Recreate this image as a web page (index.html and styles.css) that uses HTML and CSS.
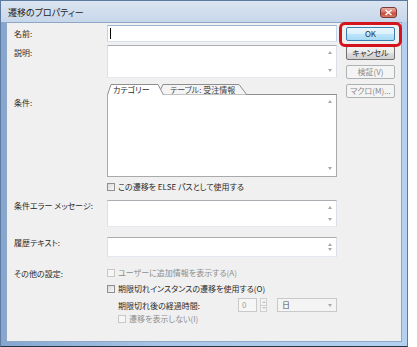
FILE: index.html
```html
<!DOCTYPE html>
<html lang="ja">
<head>
  <meta charset="UTF-8">
  <title>遷移のプロパティー</title>
  <link rel="stylesheet" href="styles.css">
</head>
<body>
  <div class="window">
    <div class="titlebar">
      <span class="title">遷移のプロパティー</span>
      <span class="close">
        <svg width="9" height="7" viewBox="0 0 9 7"><path d="M1.5 1 L7.5 6 M7.5 1 L1.5 6" stroke="#fff" stroke-width="1.6"/></svg>
      </span>
    </div>

    <div class="client">
      <div class="form">
        <!-- name -->
        <div class="row row-name">
          <div class="label lb-name">名前:</div>
          <div class="field">
            <div class="textbox name-box"><span class="caret"></span></div>
          </div>
        </div>

        <!-- description -->
        <div class="row row-desc">
          <div class="label lb-desc">説明:</div>
          <div class="field">
            <div class="textbox desc-box">
              <div class="scroll"><span class="up"></span><span class="down"></span></div>
            </div>
          </div>
        </div>

        <!-- condition tabs -->
        <div class="row row-cond">
          <div class="label lb-cond">条件:</div>
          <div class="field">
            <div class="tabs">
              <svg class="tab-shapes" width="230" height="11" viewBox="0 0 230 11">
                <polyline points="55,10.5 230,10.5" fill="none" stroke="#8e8e8e"/>
                <polygon points="51,11 56,0.5 132,0.5 140,11" fill="#f4f4f4" stroke="#8e8e8e"/>
                <polygon points="0,11 4,0.5 51,0.5 57,11" fill="#fff"/>
                <polyline points="0.5,11 4,0.5 51,0.5 56.5,11" fill="none" stroke="#8e8e8e"/>
              </svg>
              <span class="tab tab-on">カテゴリー</span>
              <span class="tab tab-off">テーブル: 受注情報</span>
            </div>
            <div class="panel">
              <div class="scroll"><span class="up"></span><span class="down"></span></div>
            </div>
          </div>
        </div>

        <!-- else path -->
        <div class="row row-else">
          <div class="label"></div>
          <div class="field check">
            <span class="box"></span>この遷移を ELSE パスとして使用する
          </div>
        </div>

        <!-- error message -->
        <div class="row row-err">
          <div class="label lb-err">条件エラー メッセージ:</div>
          <div class="field">
            <div class="textbox err-box">
              <div class="scroll"><span class="up"></span><span class="down"></span></div>
            </div>
          </div>
        </div>

        <!-- history -->
        <div class="row row-hist">
          <div class="label lb-hist">履歴テキスト:</div>
          <div class="field">
            <div class="textbox hist-box">
              <div class="scroll"><span class="up"></span><span class="down"></span></div>
            </div>
          </div>
        </div>

        <!-- other settings -->
        <div class="row row-other">
          <div class="label">その他の設定:</div>
          <div class="field check disabled">
            <span class="box"></span>ユーザーに追加情報を表示する(A)
          </div>
        </div>
        <div class="row row-expire">
          <div class="label"></div>
          <div class="field check">
            <span class="box"></span>期限切れインスタンスの遷移を使用する(O)
          </div>
        </div>
        <div class="row row-elapsed">
          <div class="label"></div>
          <div class="field elapsed">
            <span class="elapsed-label">期限切れ後の経過時間:</span>
            <span class="spin-input">0</span>
            <span class="spin-btns">
              <span class="spin-btn"><span class="up"></span></span>
              <span class="spin-btn"><span class="down"></span></span>
            </span>
            <span class="combo">日<span class="down"></span></span>
          </div>
        </div>
        <div class="row row-hide">
          <div class="label"></div>
          <div class="field check disabled indent">
            <span class="box"></span>遷移を表示しない(I)
          </div>
        </div>
      </div>

      <div class="side">
        <button class="btn btn-default">OK</button>
        <button class="btn">キャンセル</button>
        <button class="btn" disabled>検証(V)</button>
        <button class="btn" disabled>マクロ(M)...</button>
      </div>

      <div class="highlight"></div>
    </div>
  </div>
</body>
</html>
```

FILE: styles.css
```css
body {
  margin: 0;
  background: #fff;
  font-family: "Noto Sans CJK JP", "Noto Sans", sans-serif;
  font-size: 8px;
  font-feature-settings: "palt";
  color: #2a2a2a;
}

.window {
  width: 408px;
  height: 347px;
  box-sizing: border-box;
  border: 1px solid #5d7ba0;
  border-bottom-color: #24344a;
  background: linear-gradient(to right, #86a6cf 0, #a9c6e6 40%, #b4d2ef 100%);
  padding: 0 5px 4px 5px;
  display: flex;
  flex-direction: column;
}

.titlebar {
  height: 21px;
  margin: 0 -5px;
  padding: 0 5px;
  background: linear-gradient(to bottom, #dbe5f1, #c7d7ea);
  display: flex;
  justify-content: space-between;
  align-items: flex-start;
}

.title {
  margin-top: 6px;
  padding-left: 2px;
  font-size: 9px;
  line-height: 12px;
  color: #1a1a1a;
}

.close {
  margin-top: 6px;
  margin-right: 5px;
  width: 17px;
  height: 11px;
  box-sizing: border-box;
  border: 1px solid #7a3b36;
  border-radius: 3px;
  background: linear-gradient(to bottom, #eab0a6, #d26a5c 50%, #c2402f 51%, #d67d67);
  display: flex;
  align-items: center;
  justify-content: center;
}

.client {
  flex: 1;
  position: relative;
  display: flex;
  background: #f0f0f0;
  border: 1px solid #8ea7c6;
}

.form {
  width: 330px;
}

.row {
  display: flex;
}

.label {
  width: 100px;
  flex: none;
  box-sizing: border-box;
  padding-left: 7px;
  line-height: 12px;
}

.field {
  width: 230px;
}

.row-name { margin-top: 2px; }
.row-desc { margin-top: 3px; }
.row-cond { margin-top: 6px; }
.row-else { margin-top: 5px; }
.row-err { margin-top: 8px; }
.row-hist { margin-top: 10px; }
.row-other { margin-top: 11px; }
.row-expire { margin-top: 4px; }
.row-elapsed { margin-top: 4px; }
.row-hide { margin-top: 2px; }

.lb-name { padding-top: 3px; }
.lb-desc { padding-top: 2px; }
.lb-cond { padding-top: 13px; }
.lb-err { padding-top: 0; }
.lb-hist { padding-top: 0; }

.textbox {
  position: relative;
  box-sizing: border-box;
  background: #fff;
  border: 1px solid #dbdfe6;
  border-top-color: #abadb3;
  border-bottom-color: #e3e9ef;
  display: flex;
  justify-content: flex-end;
}

.name-box {
  height: 17px;
  border-color: #9bb4d2 #c4d5ea #d3e1f1 #c4d5ea;
  justify-content: flex-start;
}

.caret {
  width: 1px;
  height: 11px;
  margin: 2px 0 0 2px;
  background: #000;
}

.desc-box { height: 33px; }
.err-box { height: 27px; }
.hist-box { height: 20px; }

.scroll {
  width: 12px;
  box-sizing: border-box;
  padding: 5px 0;
  display: flex;
  flex-direction: column;
  justify-content: space-between;
  align-items: center;
}

.up, .down {
  width: 0;
  height: 0;
  border-left: 2.5px solid transparent;
  border-right: 2.5px solid transparent;
}

.up { border-bottom: 3px solid #a8a8a8; }
.down { border-top: 3px solid #a8a8a8; }

/* tabs */
.tabs {
  position: relative;
  height: 11px;
  display: flex;
  line-height: 11px;
}

.tab-shapes {
  position: absolute;
  left: 0;
  top: 0;
}

.tab {
  position: relative;
}

.tab-on {
  width: 55px;
  padding-left: 6px;
  box-sizing: border-box;
}

.tab-off {
  padding-left: 8px;
  color: #444;
}

.panel {
  height: 82px;
  box-sizing: border-box;
  background: #fff;
  border: 1px solid #a9a9a9;
  border-top: none;
  display: flex;
  justify-content: flex-end;
}

.panel .scroll {
  padding: 5px 0 6px;
}

/* checkboxes */
.check {
  display: flex;
  align-items: center;
  height: 10px;
  line-height: 10px;
}

.box {
  width: 8px;
  height: 8px;
  box-sizing: border-box;
  margin-right: 3px;
  border: 1px solid #8e8f8f;
  background: linear-gradient(135deg, #dadada, #f7f7f7);
}

.disabled {
  color: #8d8d8d;
}

.disabled .box {
  border-color: #c8c8c8;
  background: #f6f6f6;
}

.indent {
  padding-left: 11px;
}

/* elapsed time */
.elapsed {
  display: flex;
  align-items: center;
  height: 14px;
  padding-left: 11px;
  box-sizing: border-box;
}

.elapsed-label {
  width: 120px;
  flex: none;
}

.spin-input {
  width: 26px;
  height: 14px;
  box-sizing: border-box;
  border: 1px solid #c9c9c9;
  background: #f6f6f6;
  color: #a0a0a0;
  padding-left: 3px;
  line-height: 12px;
}

.spin-btns {
  margin-left: 3px;
  width: 10px;
  height: 14px;
  display: flex;
  flex-direction: column;
}

.spin-btn {
  flex: 1;
  border: 1px solid #d0d0d0;
  background: #f4f4f4;
  display: flex;
  align-items: center;
  justify-content: center;
}

.spin-btn + .spin-btn { border-top: none; }

.spin-btn .up { border-bottom-color: #c4c4c4; border-width: 0 2px 2px; }
.spin-btn .down { border-top-color: #c4c4c4; border-width: 2px 2px 0; }

.combo {
  margin-left: 10px;
  width: 84px;
  height: 14px;
  box-sizing: border-box;
  border: 1px solid #c9c9c9;
  background: #f4f4f4;
  color: #555;
  padding: 0 4px;
  line-height: 12px;
  display: flex;
  justify-content: space-between;
  align-items: center;
}

/* buttons */
.side {
  width: 49px;
  margin-left: 9px;
  padding-top: 4px;
  display: flex;
  flex-direction: column;
  gap: 5px;
}

.btn {
  height: 14px;
  padding: 0;
  font-family: inherit;
  font-size: 8px;
  font-feature-settings: "palt";
  line-height: 12px;
  color: #2a2a2a;
  border: 1px solid #707070;
  border-radius: 2px;
  background: linear-gradient(to bottom, #f2f2f2, #ebebeb 50%, #dddddd 51%, #cfcfcf);
}

.btn-default {
  border-color: #3c7fb1;
  background: linear-gradient(to bottom, #eaf6fd, #d9f0fc 50%, #bee6fd 51%, #a7d9f5);
}

.btn:disabled {
  color: #8a8a8a;
  border-color: #adb2b5;
  background: #f4f4f4;
}

.highlight {
  position: absolute;
  left: 332px;
  top: -1px;
  width: 63px;
  height: 25px;
  box-sizing: border-box;
  border: 3px solid #d3141d;
  border-radius: 6px;
}
```
